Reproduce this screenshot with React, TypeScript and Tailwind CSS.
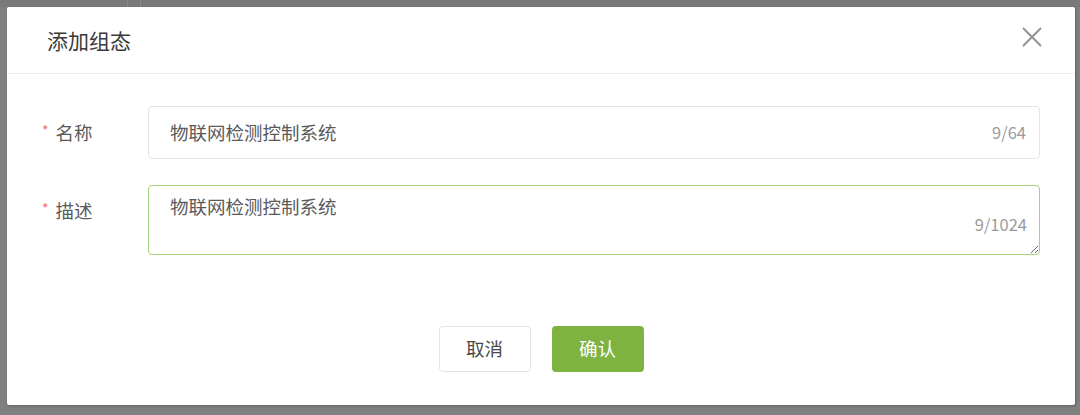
import React from 'react';

const font = { fontFamily: '"Noto Sans CJK SC", "Noto Sans", sans-serif' };

export default function App() {
  return (
    <div className="w-[1080px] h-[415px] bg-[#808080] relative overflow-hidden" style={font}>
      {/* faint page behind the overlay */}
      <div className="absolute left-0 right-0 top-0 h-[7px] bg-[#797979]" />
      <div className="absolute left-[127px] top-0 h-[7px] w-px bg-[#8a8a8a]" />
      <div className="absolute left-[140px] top-0 h-[7px] w-px bg-[#8a8a8a]" />

      <div className="absolute left-[7px] top-[7px] w-[1068px] h-[398px] bg-white rounded-[2px] shadow-[1px_1px_3px_rgba(0,0,0,0.25)] flex flex-col">
        <div className="h-[67px] border-b border-[#eeeeee] flex items-center justify-between pl-[40px] pr-[32px]">
          <span className="text-[21px] text-[#3a3a3a] leading-none">添加组态</span>
          <svg width="22" height="22" viewBox="0 0 22 22" className="mt-[-7px]">
            <path d="M2 2L20 20M20 2L2 20" stroke="#8f8f8f" strokeWidth="1.8" fill="none" />
          </svg>
        </div>

        <div className="flex flex-col pt-[32px] px-[35px]">
          <div className="flex items-center">
            <div className="w-[106px] flex items-center text-[18.5px] text-[#5a5a5a]">
              <span className="text-[#f56c6c] text-[14px] mr-[7px] mt-[-4px]">*</span>
              <span>名称</span>
            </div>
            <div className="flex-1 h-[53px] border border-[#e4e4e7] rounded-[4px] flex items-center justify-between pl-[21px] pr-[13px]">
              <span className="text-[18.5px] text-[#5a5a5a]">物联网检测控制系统</span>
              <span className="text-[16.5px] text-[#9a9a9a]">9/64</span>
            </div>
          </div>

          <div className="flex items-start mt-[26px]">
            <div className="w-[106px] flex items-center text-[18.5px] text-[#5a5a5a] pt-[12px]">
              <span className="text-[#f56c6c] text-[14px] mr-[7px] mt-[-4px]">*</span>
              <span>描述</span>
            </div>
            <div className="flex-1 relative h-[70px]">
              <textarea
                defaultValue="物联网检测控制系统"
                className="block w-full h-[70px] border border-[#a7d27d] rounded-[4px] pl-[21px] pr-[13px] pt-[6px] text-[18.5px] leading-[28px] text-[#5a5a5a] outline-none resize-y"
                style={font}
              />
              <span className="absolute right-[13px] top-[27px] text-[16.5px] text-[#9a9a9a]">9/1024</span>
            </div>
          </div>
        </div>

        <div className="flex justify-center gap-[21px] mt-[71px]">
          <button className="w-[92px] h-[46px] border border-[#e2e2ee] rounded-[4px] text-[18.5px] text-[#4a4a4a] bg-white">
            取消
          </button>
          <button className="w-[92px] h-[46px] rounded-[4px] text-[18.5px] text-white bg-[#7eb342]">
            确认
          </button>
        </div>
      </div>
    </div>
  );
}
